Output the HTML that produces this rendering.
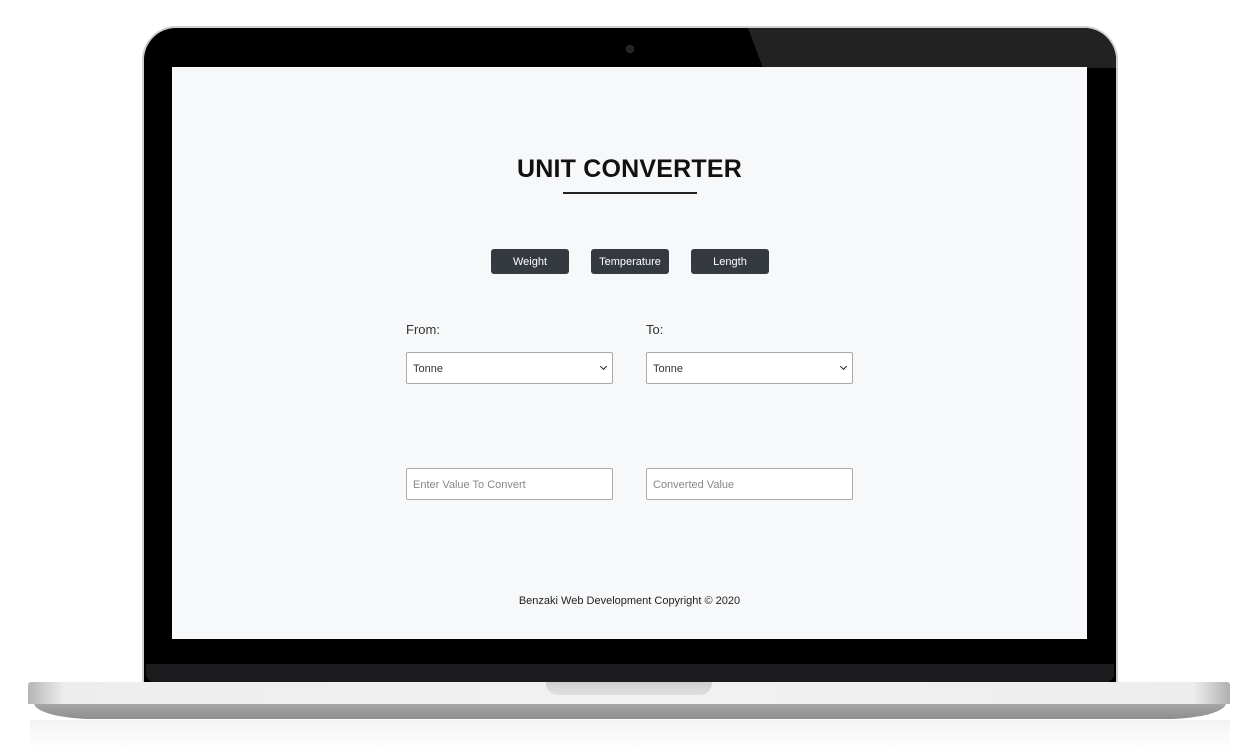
<!DOCTYPE html>
<html><head><style>
*{box-sizing:border-box;margin:0;padding:0}
body{width:1260px;height:756px;background:#fff;position:relative;overflow:hidden;font-family:"Liberation Sans",sans-serif}
.bez{position:absolute;left:142px;top:26px;width:976px;height:660px;background:#000;border-radius:34px 34px 0 0;border:2px solid #cfcfcf;border-bottom:none}
.gloss{position:absolute;left:748px;top:28px;width:368px;height:40px;background:#222;border-top-right-radius:32px;clip-path:polygon(0 0,100% 0,100% 100%,15px 100%)}
.cam{position:absolute;left:626px;top:45px;width:8px;height:8px;border-radius:50%;background:#222;border:1px solid #333}
.strip{position:absolute;left:146px;top:664px;width:968px;height:18px;background:#1c1c1e;border-radius:0 0 8px 8px}
.screen{position:absolute;left:172px;top:67px;width:915px;height:572px;background:#f7f8fa}
.base{position:absolute;left:28px;top:682px;width:1202px;height:22px;background:linear-gradient(90deg,#b5b5b5,#ededed 3%,#f2f2f2 50%,#ededed 97%,#b0b0b0);border-radius:3px 3px 0 0}
.base2{position:absolute;left:34px;top:703px;width:1192px;height:16px;background:linear-gradient(#a8a8a8,#8e8e8e);border-radius:0 0 60px 60px/0 0 16px 16px}
.notch{position:absolute;left:546px;top:682px;width:166px;height:13px;background:linear-gradient(#cfcfcf,#e0e0e0);border-radius:0 0 12px 12px}
.refl{position:absolute;left:30px;top:720px;width:1200px;height:30px;background:linear-gradient(#f3f3f3,#fff)}
h1{position:absolute;left:0;width:915px;top:88px;text-align:center;font-size:25px;font-weight:bold;color:#111;letter-spacing:0.2px}
.ul{position:absolute;left:391px;top:125px;width:134px;height:2px;background:#222}
.btn{position:absolute;top:182px;width:78px;height:25px;background:#343a40;color:#fff;border-radius:3px;font-size:11px;text-align:center;line-height:27px}
.lbl{position:absolute;top:255px;font-size:13px;color:#333}
.box{position:absolute;width:207px;height:32px;background:#fff;border:1px solid #aaa;border-radius:2px;font-size:11px;color:#333;padding:10px 6px}
.ph{color:#888}
.arr{position:absolute;right:6px;top:11px;width:5px;height:5px;border-right:1.5px solid #222;border-bottom:1.5px solid #222;transform:rotate(45deg)}
.foot{position:absolute;top:528px;left:0;width:915px;text-align:center;font-size:11px;color:#222}
</style></head><body>
<div class="refl"></div>
<div class="bez"></div>
<div class="gloss"></div>
<div class="cam"></div>
<div class="strip"></div>
<div class="screen">
<h1>UNIT CONVERTER</h1>
<div class="ul"></div>
<div class="btn" style="left:319px">Weight</div>
<div class="btn" style="left:419px">Temperature</div>
<div class="btn" style="left:519px">Length</div>
<div class="lbl" style="left:234px">From:</div>
<div class="lbl" style="left:474px">To:</div>
<div class="box" style="left:234px;top:285px">Tonne<span class="arr"></span></div>
<div class="box" style="left:474px;top:285px">Tonne<span class="arr"></span></div>
<div class="box ph" style="left:234px;top:401px">Enter Value To Convert</div>
<div class="box ph" style="left:474px;top:401px">Converted Value</div>
<div class="foot">Benzaki Web Development Copyright © 2020</div>
</div>
<div class="base2"></div>
<div class="base"></div>
<div class="notch"></div>
</body></html>
